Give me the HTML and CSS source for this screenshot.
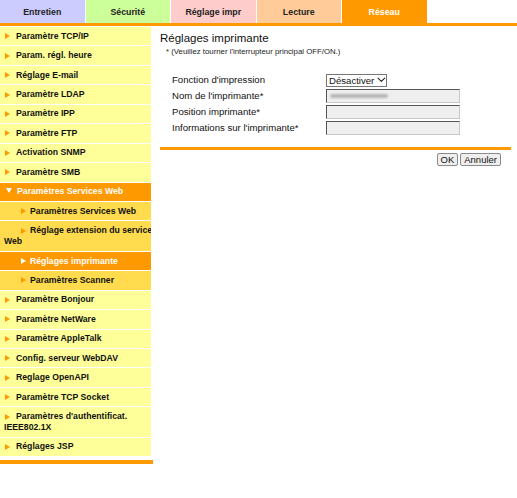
FILE: index.html
```html
<!DOCTYPE html>
<html lang="fr">
<head>
<meta charset="utf-8">
<title>Réglages imprimante</title>
<link rel="stylesheet" href="styles.css">
</head>
<body>
<div class="tabs">
  <div class="tab t1">Entretien</div>
  <div class="tab t2">Sécurité</div>
  <div class="tab t3">Réglage impr</div>
  <div class="tab t4">Lecture</div>
  <div class="tab t5">Réseau</div>
</div>
<div class="page">
  <div class="sidecol">
    <nav class="side">
      <div class="item"><i class="arr"></i>Paramètre TCP/IP</div>
      <div class="item"><i class="arr"></i>Param. régl. heure</div>
      <div class="item"><i class="arr"></i>Réglage E-mail</div>
      <div class="item"><i class="arr"></i>Paramètre LDAP</div>
      <div class="item"><i class="arr"></i>Paramètre IPP</div>
      <div class="item"><i class="arr"></i>Paramètre FTP</div>
      <div class="item"><i class="arr"></i>Activation SNMP</div>
      <div class="item"><i class="arr"></i>Paramètre SMB</div>
      <div class="item open"><i class="arr down"></i>Paramètres Services Web</div>
      <div class="item sub"><i class="arr"></i>Paramètres Services Web</div>
      <div class="item sub"><span class="nw"><i class="arr"></i>Réglage extension du service</span><br>Web</div>
      <div class="item sub cur"><i class="arr"></i>Réglages imprimante</div>
      <div class="item sub"><i class="arr"></i>Paramètres Scanner</div>
      <div class="item"><i class="arr"></i>Paramètre Bonjour</div>
      <div class="item"><i class="arr"></i>Paramètre NetWare</div>
      <div class="item"><i class="arr"></i>Paramètre AppleTalk</div>
      <div class="item"><i class="arr"></i>Config. serveur WebDAV</div>
      <div class="item"><i class="arr"></i>Reglage OpenAPI</div>
      <div class="item"><i class="arr"></i>Paramètre TCP Socket</div>
      <div class="item"><span class="nw"><i class="arr"></i>Paramètres d'authentificat.</span><br>IEEE802.1X</div>
      <div class="item"><i class="arr"></i>Réglages JSP</div>
    </nav>
    <div class="side-end"></div>
  </div>
  <main class="main">
    <h1 class="title">Réglages imprimante</h1>
    <p class="note">* (Veuillez tourner l'interrupteur principal OFF/ON.)</p>
    <div class="form">
      <div class="lbl">Fonction d'impression</div>
      <div class="ctl"><div class="select">Désactiver<svg class="chev" width="9" height="6" viewBox="0 0 9 6"><path d="M1 1 L4.5 4.5 L8 1" fill="none" stroke="#222" stroke-width="1.1" stroke-linecap="round" stroke-linejoin="round"/></svg></div></div>
      <div class="lbl">Nom de l'imprimante*</div>
      <div class="ctl"><div class="input"><span class="blur"></span></div></div>
      <div class="lbl">Position imprimante*</div>
      <div class="ctl"><div class="input"></div></div>
      <div class="lbl">Informations sur l'imprimante*</div>
      <div class="ctl"><div class="input"></div></div>
    </div>
    <div class="rule"></div>
    <div class="actions">
      <button class="btn" type="button">OK</button>
      <button class="btn" type="button">Annuler</button>
    </div>
  </main>
</div>
</body>
</html>
```

FILE: styles.css
```css
html, body {
  margin: 0;
  padding: 0;
  background: #fff;
  font-family: "Liberation Sans", Arial, sans-serif;
  color: #111;
}

.tabs {
  display: flex;
  gap: 1px;
  height: 23px;
  border-bottom: 3px solid #ff9900;
}
.tab {
  width: 84.5px;
  display: flex;
  align-items: center;
  justify-content: center;
  font-size: 8.8px;
  font-weight: bold;
  color: #222;
}
.t1 { background: #ccccff; }
.t2 { background: #ccff99; }
.t3 { background: #ffcccc; }
.t4 { background: #ffcc99; }
.t5 { background: #ff9900; color: #fff; }

.page {
  display: flex;
  align-items: flex-start;
}

.sidecol {
  width: 153px;
  padding-top: 1px;
}
.side {
  width: 151px;
  display: flex;
  flex-direction: column;
  gap: 1px;
}
.item {
  background: #ffff99;
  font-size: 8.7px;
  font-weight: bold;
  line-height: 11px;
  padding: 3.73px 0 3.73px 4px;
  color: #111;
  white-space: nowrap;
  overflow: hidden;
}
.nw { white-space: nowrap; }
.arr {
  display: inline-block;
  width: 0;
  height: 0;
  border-left: 5px solid #ff9900;
  border-top: 3.5px solid transparent;
  border-bottom: 3.5px solid transparent;
  margin: 0 6px 0 1px;
  vertical-align: -0.5px;
}
.arr.down {
  border-left: 3px solid transparent;
  border-right: 3px solid transparent;
  border-top: 5px solid #fff;
  border-bottom: 0;
  margin: 0 5px 0 2px;
  vertical-align: 1px;
}
.open {
  background: #ff9900;
  color: #fff;
}
.sub {
  background: #ffdb4d;
}
.sub .arr {
  margin: 0 4px 0 17px;
}
.sub.cur {
  background: #ff9900;
  color: #fff;
}
.sub.cur .arr {
  border-left-color: #fff;
}
.side-end {
  margin-top: 4px;
  height: 4px;
  background: #ff9900;
}

.main {
  margin-left: 7px;
  width: 351px;
}
.title {
  margin: 0;
  padding-top: 5px;
  font-size: 11.5px;
  line-height: 14px;
  font-weight: normal;
  color: #111;
}
.note {
  margin: 2px 0 0 6px;
  font-size: 7.8px;
  line-height: 9px;
  color: #222;
}
.form {
  margin: 17.5px 0 0 12px;
  display: grid;
  grid-template-columns: 154px 134px;
  row-gap: 2.3px;
  align-items: center;
}
.lbl {
  font-size: 9.6px;
  line-height: 12px;
  color: #111;
}
.ctl {
  display: flex;
}
.select {
  box-sizing: border-box;
  height: 13px;
  width: 61px;
  border: 1px solid #777;
  background: #fff;
  font-size: 9.6px;
  line-height: 11px;
  padding-left: 2px;
  display: flex;
  align-items: center;
  gap: 3px;
  color: #111;
}
.chev { display: block; }
.input {
  box-sizing: border-box;
  width: 134px;
  height: 14px;
  background: #efefef;
  border-top: 1px solid #555;
  border-left: 1px solid #555;
  border-bottom: 1px solid #c8c8c8;
  border-right: 1px solid #c8c8c8;
  display: flex;
  align-items: center;
  padding-left: 3px;
}
.blur {
  display: block;
  width: 58px;
  height: 4px;
  background: #b5b5b5;
  border-radius: 2px;
  filter: blur(1px);
}
.rule {
  margin-top: 12px;
  height: 3px;
  background: #ff9900;
}
.actions {
  display: flex;
  justify-content: flex-end;
  gap: 2px;
  margin-top: 3px;
  padding-right: 10px;
}
.btn {
  box-sizing: border-box;
  height: 13px;
  padding: 0 3px;
  font-family: "Liberation Sans", Arial, sans-serif;
  font-size: 9.5px;
  line-height: 11px;
  color: #111;
  background: #efefef;
  border: 1px solid #8a8a8a;
  border-radius: 2px;
}
```
